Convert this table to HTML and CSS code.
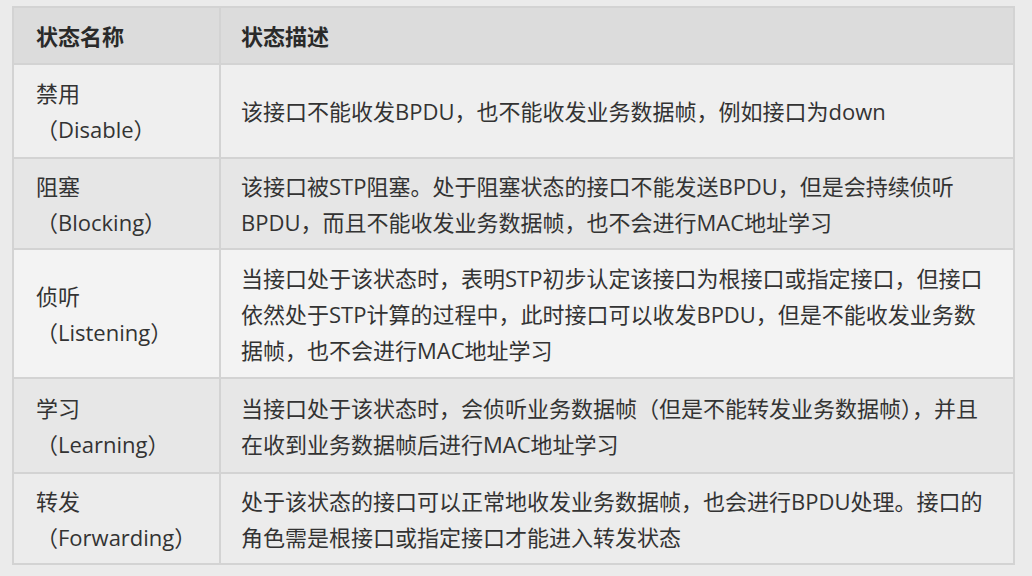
FILE: index.html
```html
<!DOCTYPE html>
<html lang="zh">
<head>
<meta charset="utf-8">
<link rel="stylesheet" href="styles.css">
</head>
<body>
<div class="page">
<table class="states">
  <colgroup>
    <col class="col-name">
    <col class="col-desc">
  </colgroup>
  <thead>
    <tr class="head">
      <th class="name">状态名称</th>
      <th class="desc">状态描述</th>
    </tr>
  </thead>
  <tbody>
    <tr class="r1">
      <td class="name">禁用<br>（Disable）</td>
      <td class="desc">该接口不能收发BPDU，也不能收发业务数据帧，例如接口为down</td>
    </tr>
    <tr class="r2">
      <td class="name">阻塞<br>（Blocking）</td>
      <td class="desc">该接口被STP阻塞。处于阻塞状态的接口不能发送BPDU，但是会持续侦听<br>BPDU，而且不能收发业务数据帧，也不会进行MAC地址学习</td>
    </tr>
    <tr class="r3">
      <td class="name">侦听<br>（Listening）</td>
      <td class="desc">当接口处于该状态时，表明STP初步认定该接口为根接口或指定接口，但接口<br>依然处于STP计算的过程中，此时接口可以收发BPDU，但是不能收发业务数<br>据帧，也不会进行MAC地址学习</td>
    </tr>
    <tr class="r4">
      <td class="name">学习<br>（Learning）</td>
      <td class="desc">当接口处于该状态时，会侦听业务数据帧（但是不能转发业务数据帧），并且<br>在收到业务数据帧后进行MAC地址学习</td>
    </tr>
    <tr class="r5">
      <td class="name">转发<br>（Forwarding）</td>
      <td class="desc">处于该状态的接口可以正常地收发业务数据帧，也会进行BPDU处理。接口的<br>角色需是根接口或指定接口才能进入转发状态</td>
    </tr>
  </tbody>
</table>
</div>
</body>
</html>
```
FILE: styles.css
```css
html, body {
  margin: 0;
  padding: 0;
  background: #ebebeb;
}
.page {
  padding: 6px 0 0 12px;
  font-family: "Open Sans", "Noto Sans CJK SC", sans-serif;
  color: #333;
}
.states {
  border-collapse: collapse;
  width: 1003px;
  table-layout: fixed;
  font-size: 22px;
  line-height: 36px;
}
.col-name { width: 207px; }
.states th, .states td {
  border: 2px solid #d3d3d3;
  vertical-align: middle;
  text-align: left;
  padding: 0;
  white-space: nowrap;
  overflow: hidden;
}
.states .name {
  padding-left: 22px;
}
.states .desc {
  padding-left: 20px;
  padding-right: 4px;
}
.states th {
  font-weight: bold;
  color: #2a2a2a;
}
.head { height: 57px; background: #dcdcdc; }
.r1 { height: 94px; background: #efefef; }
.r2 { height: 91px; background: #e6e6e6; }
.r3 { height: 129px; background: #f3f3f3; }
.r4 { height: 95px; background: #e7e7e7; }
.r5 { height: 91px; background: #ececec; }
```
